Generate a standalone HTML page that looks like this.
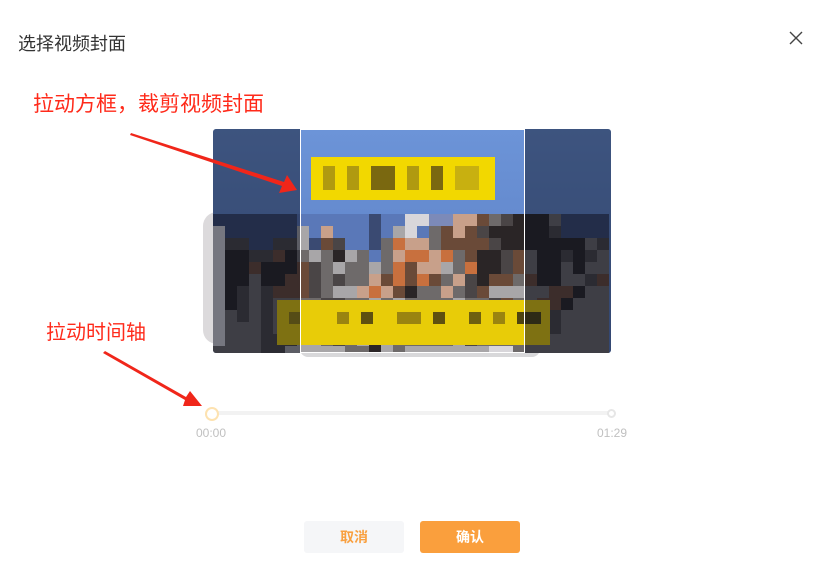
<!DOCTYPE html>
<html><head><meta charset="utf-8"><style>
*{margin:0;padding:0;box-sizing:border-box}
body{width:820px;height:562px;background:#fff;position:relative;overflow:hidden;font-family:"Liberation Sans","Noto Sans CJK SC",sans-serif}
.t{position:absolute;left:18px;top:30px;font-size:18px;color:#333}
.r1{position:absolute;left:33px;top:88px;font-size:21px;color:#ff2a1a}
.r2{position:absolute;left:46px;top:316px;font-size:20px;color:#ff2a1a}
.x{position:absolute;left:786px;top:28px}
.track{position:absolute;left:212px;top:411px;width:400px;height:4px;background:#f2f2f2;border-radius:2px}
.k1{position:absolute;left:205px;top:407px;width:14px;height:14px;border-radius:50%;border:2px solid #fde2b0;background:#fff}
.k2{position:absolute;left:607px;top:409px;width:9px;height:9px;border-radius:50%;border:2px solid #e6e6e6;background:#fff}
.tm{position:absolute;top:426px;font-size:12px;color:#c0c0c0}
.b{position:absolute;top:521px;width:100px;height:32px;border-radius:3px;font-size:14px;font-weight:bold;text-align:center;line-height:32px}
</style></head><body>
<div class="t">选择视频封面</div>
<svg class="x" width="20" height="20" viewBox="0 0 20 20"><path d="M4 4L16 16M16 4L4 16" stroke="#444" stroke-width="1.4"/></svg>
<div class="r1">拉动方框，裁剪视频封面</div>
<div class="r2">拉动时间轴</div>

<svg style="position:absolute;left:0;top:0" width="820" height="562">
<defs><clipPath id="c"><rect x="213" y="129" width="398" height="224" rx="3"/></clipPath>
<linearGradient id="sky" x1="0" y1="0" x2="0" y2="1"><stop offset="0" stop-color="#6c94d8"/><stop offset="1" stop-color="#5a7cc0"/></linearGradient></defs>
<rect x="203" y="212" width="30" height="132" rx="14" fill="#dcdadc"/>
<rect x="300" y="340" width="240" height="17" rx="8" fill="#d8d8da"/>
<g clip-path="url(#c)">
<rect x="213" y="129" width="398" height="224" fill="url(#sky)"/>
<g id="grid"></g>
<rect x="311" y="157" width="184" height="43" fill="#f2d800"/>
<g fill="#b09a10"><rect x="323" y="166" width="12" height="24"/><rect x="347" y="166" width="12" height="24"/><rect x="371" y="166" width="24" height="24" fill="#7a6810"/><rect x="407" y="166" width="12" height="24"/><rect x="431" y="166" width="12" height="24" fill="#7a6810"/><rect x="455" y="166" width="24" height="24" fill="#c8b010"/></g>
<rect x="277" y="300" width="273" height="45" fill="#e8cc08"/>
<g fill="#9a8410"><rect x="289" y="312" width="12" height="12"/><rect x="337" y="312" width="12" height="12"/><rect x="361" y="312" width="12" height="12" fill="#5e5010"/><rect x="397" y="312" width="24" height="12"/><rect x="433" y="312" width="12" height="12" fill="#5e5010"/><rect x="469" y="312" width="12" height="12" fill="#6e6010"/><rect x="493" y="312" width="12" height="12"/><rect x="517" y="312" width="24" height="12" fill="#4e4410"/></g>
<rect x="213" y="129" width="87" height="224" fill="rgba(10,15,30,0.48)"/>
<rect x="524" y="129" width="87" height="224" fill="rgba(10,15,30,0.48)"/>
<rect x="300.5" y="129.5" width="224" height="223" fill="none" stroke="#fff" stroke-width="1"/>
</g>
<polygon points="130,135 131,133 284,182 287,175 297,190 279,193 282,186" fill="#f0261a"/>
<polygon points="103,353 105,351 186,397 190,391 202,406 183,406 185,400" fill="#f0261a"/>
</svg>

<div class="track"></div><div class="k1"></div><div class="k2"></div>
<div class="tm" style="left:196px">00:00</div><div class="tm" style="left:597px">01:29</div>
<div class="b" style="left:304px;background:#f5f6f8;color:#f9a040">取消</div>
<div class="b" style="left:420px;background:#fa9f3d;color:#fff">确认</div>
<script>
var P={D:"#2a2526",d:"#4a4546",g:"#6e6a6a",l:"#a8a6a8",w:"#d8d6da",b:"#5a78b8",n:"#3a4a72",o:"#c8703e",p:"#c8a08a",r:"#6a4a38",s:"#7c8ab8"};
var R=["nnnnnnnbbbbbbnbbwwsspprgdDDDgnnnn","wnnnnnnlbpbbbnblwbgrprdDDDDDdnnnn","wddnnddlnrdbbngoppgrrrrdDDDDDDDgd","wDDddrDglgDlgbgpoopogrDDdrgDDdDdg","wDDrDDDrdglgglgorpplgoDDdrgDDgDgg","wDDgDDrrdgdggprororgpdDrrgrDDggdr","wDdgdrrrdgllpoprDggpgdrlllggrrDgg","wDdgdggggddgglglgggglggdrggrrDggg","wgdgdgggggggggggggggggggDdrrdgggg","wgggdgggggggggggggggggggggdgdgggg","wgggdddllgdglDlgggggldggggggggggg","ggggddlllllggDlglllllllwwgggggggg"];
var h="";for(var j=0;j<R.length;j++)for(var i=0;i<33;i++){var c=P[R[j][i]]||"#6e6a6a";h+='<rect x="'+(213+i*12)+'" y="'+(214+j*12)+'" width="12" height="12" fill="'+c+'"/>';}
document.getElementById("grid").innerHTML=h;
</script>
</body></html>
